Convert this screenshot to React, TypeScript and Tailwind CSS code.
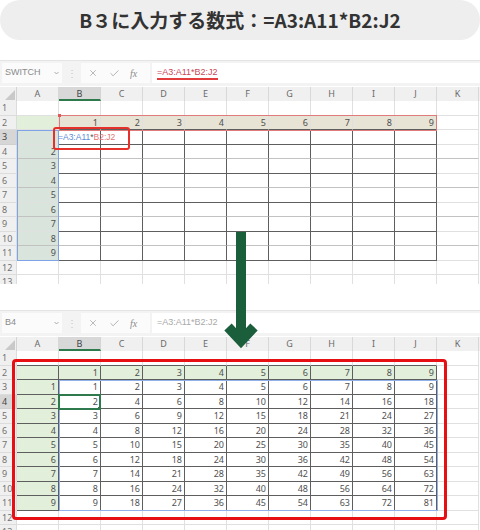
import { X, Check } from "lucide-react";

const COLS = ["A", "B", "C", "D", "E", "F", "G", "H", "I", "J", "K"];
const ROWS = [1, 2, 3, 4, 5, 6, 7, 8, 9, 10, 11, 12, 13];

type Mode = "before" | "after";

function inData(mode: Mode, r: number, c: number) {
  if (mode === "before") return r >= 3 && r <= 11 && c >= 2 && c <= 10;
  return r >= 2 && r <= 11 && c >= 1 && c <= 10;
}

function cellBg(mode: Mode, r: number, c: number) {
  if (mode === "before") {
    if (r === 2 && c === 1) return "bg-[#e2efda]";
    if (r === 2 && c >= 2 && c <= 10) return "bg-[#e7e3d5]";
    if (r >= 3 && r <= 11 && c === 1) return "bg-[#d9e4dc]";
    return "bg-white";
  }
  if ((r === 2 && c <= 10) || (r >= 3 && r <= 11 && c === 1)) return "bg-[#e2efda]";
  return "bg-white";
}

function cellText(mode: Mode, r: number, c: number) {
  if (r === 2 && c >= 2 && c <= 10) return String(c - 1);
  if (mode === "before") {
    if (c === 1 && r >= 4 && r <= 11) return String(r - 2);
    return "";
  }
  if (c === 1 && r >= 3 && r <= 11) return String(r - 2);
  if (r >= 3 && r <= 11 && c >= 2 && c <= 10) return String((r - 2) * (c - 1));
  return "";
}

function rightBorder(mode: Mode, r: number, c: number) {
  return inData(mode, r, c) || inData(mode, r, c + 1) ? "border-r-[#5e5e5e]" : "border-r-[#e0e0e0]";
}

function bottomBorder(mode: Mode, r: number, c: number) {
  const dark = inData(mode, r, c) || inData(mode, r + 1, c);
  // the downscaled screenshot shows every other row line as a soft grey
  if (mode === "before" && r % 2 === 0 && r >= 4 && r <= 10) return "border-b-[#c2c2c2]";
  return dark ? "border-b-[#5e5e5e]" : "border-b-[#e0e0e0]";
}

function Toolbar({ name, mode }: { name: string; mode: Mode }) {
  return (
    <div className="flex h-[26px] items-start border-t border-[#e4e4e4] bg-[#f3f3f3] pl-[2px] pt-[2px]">
      <div className="flex h-[20px] w-[60px] items-center justify-between bg-[#fbfbfb] pl-[3px] pr-[3px] font-['Liberation_Sans'] text-[9px] text-[#8a8a8a]">
        <span>{name}</span>
        <svg width="5" height="4" viewBox="0 0 5 4">
          <path d="M0.5 1 L2.5 3 L4.5 1" fill="none" stroke="#9a9a9a" strokeWidth="0.8" />
        </svg>
      </div>
      <div className="flex h-[20px] w-[19px] items-center justify-center text-[10px] leading-none text-[#c6c6c6]">⋮</div>
      <div className="flex h-[20px] w-[69px] items-center bg-[#fbfbfb] pl-[7px] text-[#8c8c8c]">
        <X size={10} strokeWidth={1.4} />
        <Check size={11} strokeWidth={1.4} className="ml-[11px]" />
        <span className="ml-[10px] font-['Liberation_Serif'] text-[10px] italic">fx</span>
      </div>
      <div className="ml-[2px] flex h-[20px] flex-1 items-center bg-white pl-[5px] font-['Liberation_Sans'] text-[9px]">
        {mode === "before" ? (
          <span className="border-b-2 border-[#e23b3b] leading-[11px] text-[#c8485a]">=A3:A11*B2:J2</span>
        ) : (
          <span className="text-[#a9a9a9]">=A3:A11*B2:J2</span>
        )}
      </div>
    </div>
  );
}

function Sheet({ mode }: { mode: Mode }) {
  const selRow = mode === "before" ? 3 : 4;
  return (
    <div className="relative h-[224px] overflow-hidden bg-white font-['Noto_Sans'] text-[#505050]">
      <Toolbar name={mode === "before" ? "SWITCH" : "B4"} mode={mode} />
      <div className="mt-[1px] flex h-[14px] bg-[#f0f0f0] text-[9px] leading-[14px] text-[#6a6a6a]">
        <div className="relative w-[17px] border-r border-[#d4d4d4]">
          <svg className="absolute bottom-[1px] right-[1px]" width="10" height="10" viewBox="0 0 10 10">
            <path d="M10 0 L10 10 L0 10 Z" fill="#c9c9c9" />
          </svg>
        </div>
        {COLS.map((col) => (
          <div
            key={col}
            className={
              col === "B"
                ? "w-[42px] border-b-2 border-r border-b-[#2f7a4d] border-r-[#d4d4d4] bg-[#d8d8d8] text-center text-[#444]"
                : "w-[42px] border-r border-[#d8d8d8] text-center"
            }
          >
            {col}
          </div>
        ))}
      </div>
      {ROWS.map((r) => (
        <div key={r} className="flex h-[14.5px]">
          <div
            className={
              r === selRow
                ? "w-[17px] border-b border-r border-[#cfcfcf] bg-[#d6d6d6] pl-[2px] text-[9px] leading-[14px] text-[#444]"
                : "w-[17px] border-b border-r border-[#dcdcdc] bg-[#f0f0f0] pl-[2px] text-[9px] leading-[14px] text-[#707070]"
            }
          >
            {r}
          </div>
          {COLS.map((col, i) => {
            const c = i + 1;
            const isFormula = mode === "before" && r === 3 && c === 2;
            return (
              <div
                key={col}
                className={`w-[42px] border-b border-r pr-[2px] text-right text-[9px] leading-[14px] ${cellBg(mode, r, c)} ${rightBorder(mode, r, c)} ${bottomBorder(mode, r, c)}`}
              >
                {isFormula ? (
                  <div className="relative z-[1] -ml-[1px] text-left font-['Liberation_Sans'] text-[8.5px] whitespace-nowrap">
                    <span className="text-[#5b8ad8]">=A3:A11</span>
                    <span className="text-[#555]">*</span>
                    <span className="text-[#e57373]">B2:J2</span>
                  </div>
                ) : (
                  cellText(mode, r, c)
                )}
              </div>
            );
          })}
        </div>
      ))}

      {mode === "before" ? (
        <>
          <div className="absolute left-[59px] top-[55px] h-[15.5px] w-[378px] border border-[#e07b7b]" />
          <div className="absolute left-[58px] top-[54px] h-[3px] w-[3px] bg-[#e05a5a]" />
          <div className="absolute left-[17px] top-[70px] h-[130.5px] w-[42px] border border-[#7ea4e6]" />
          <div className="absolute left-[53px] top-[67px] z-[2] h-[23px] w-[77px] rounded-[3px] border-[2.5px] border-[#e8302a]" />
        </>
      ) : (
        <>
          <div className="absolute left-[59px] top-[70px] h-[131px] w-[379px] border border-[#8fb0e8]" />
          <div className="absolute left-[58px] top-[84px] h-[15.5px] w-[43px] border-2 border-[#2f7a4d]" />
          <div className="absolute left-[98px] top-[97px] h-[3px] w-[3px] bg-[#2f7a4d]" />
          <div className="absolute left-[12px] top-[49px] h-[161px] w-[435px] rounded-[4px] border-[3px] border-[#e60f14]" />
        </>
      )}
    </div>
  );
}

function Arrow() {
  return (
    <svg className="absolute left-[218px] top-[228px] z-10" width="46" height="126" viewBox="0 0 46 126">
      <rect x="18" y="4" width="10" height="108" fill="#1b5e3b" />
      <polyline points="10,99 23,113 36,99" fill="none" stroke="#1b5e3b" strokeWidth="10" strokeLinejoin="miter" />
    </svg>
  );
}

export default function App() {
  return (
    <div className="relative h-[530px] w-[480px] overflow-hidden bg-white">
      <div className="flex h-[40px] items-center justify-center rounded-full bg-[#eeeeee] font-['Noto_Sans_CJK_JP',sans-serif] text-[19px] font-bold text-[#333333]">
        B３に入力する数式：=A3:A11*B2:J2
      </div>
      <div className="mt-[20px]">
        <Sheet mode="before" />
      </div>
      <div className="mt-[26px]">
        <Sheet mode="after" />
      </div>
      <Arrow />
    </div>
  );
}
